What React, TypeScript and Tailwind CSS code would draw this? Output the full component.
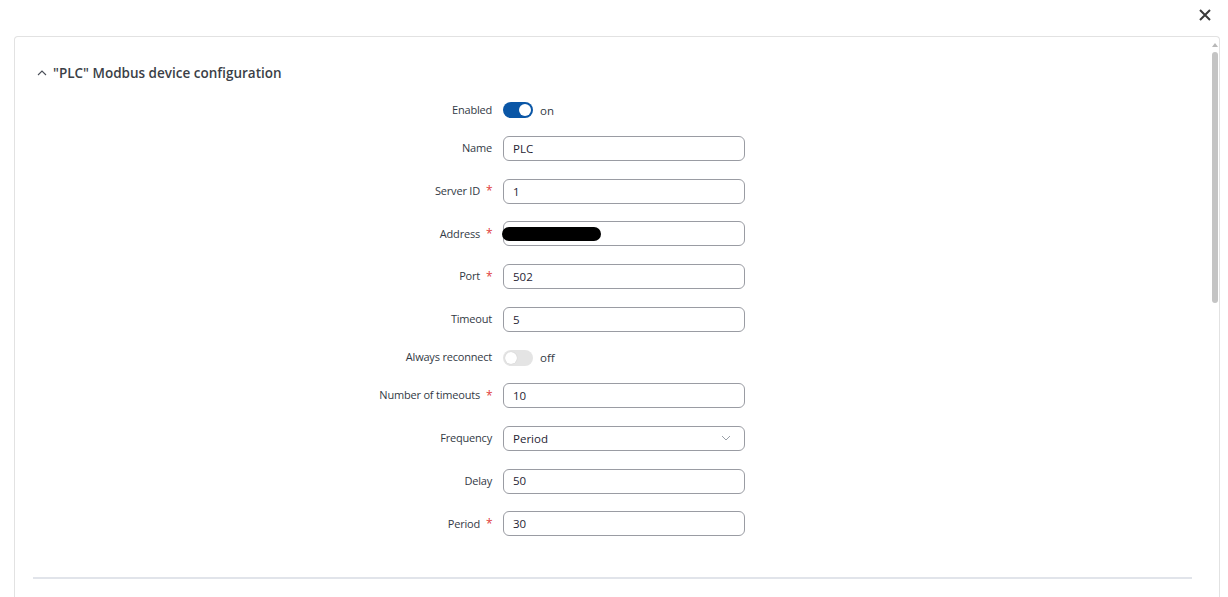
import React from "react";

const font = { fontFamily: '"Open Sans", "Noto Sans", sans-serif' };

function Label({ text, req }: { text: string; req?: boolean }) {
  return (
    <div className="w-[477px] shrink-0 flex justify-end items-center text-[11px] tracking-[-0.2px] text-[#333a45]">
      <span>{text}</span>
      {req ? <span className="ml-[6px] text-[#e0403a] w-[6px] text-[12px]">*</span> : null}
    </div>
  );
}

function InputRow({ label, value, req, redact }: { label: string; value: string; req?: boolean; redact?: boolean }) {
  return (
    <div className="flex items-center gap-[11px] h-[25px]">
      <Label text={label} req={req} />
      <div className="relative w-[242px] h-[25px] rounded-[6px] border border-[#9a9ca3] flex items-center px-[9px] text-[11.5px] text-[#1f2433]">
        {value}
        {redact ? (
          <span className="absolute left-[-2px] top-[5px] w-[99px] h-[14px] rounded-full bg-black" />
        ) : null}
      </div>
    </div>
  );
}

function ToggleRow({ label, on }: { label: string; on: boolean }) {
  return (
    <div className="flex items-center gap-[11px] h-[16px]">
      <Label text={label} />
      <div className="flex items-center gap-[7px]">
        <div
          className={
            on
              ? "w-[30px] h-[16px] rounded-full bg-[#0a56a6] flex items-center justify-end pr-[2px]"
              : "w-[30px] h-[16px] rounded-full bg-[#e4e4e4] flex items-center justify-start pl-[2px]"
          }
        >
          <div className={on ? "w-[12px] h-[12px] rounded-full bg-white" : "w-[12px] h-[12px] rounded-full bg-white shadow-[0_0_1px_rgba(0,0,0,0.2)]"} />
        </div>
        <span className="text-[11.5px] text-[#333a45]">{on ? "on" : "off"}</span>
      </div>
    </div>
  );
}

function SelectRow({ label, value }: { label: string; value: string }) {
  return (
    <div className="flex items-center gap-[11px] h-[25px]">
      <Label text={label} />
      <div className="w-[242px] h-[25px] rounded-[6px] border border-[#9a9ca3] flex items-center justify-between pl-[9px] pr-[13px] text-[11.5px] text-[#1f2433]">
        <span>{value}</span>
        <svg width="10" height="6" viewBox="0 0 10 6" fill="none">
          <path d="M1 1l4 4 4-4" stroke="#9aa0a8" strokeWidth="1" />
        </svg>
      </div>
    </div>
  );
}

export default function App() {
  return (
    <div className="w-[1228px] h-[597px] bg-white overflow-hidden flex flex-col" style={font}>
      <div className="h-[36px] flex items-start justify-end pr-[16px] pt-[8px]">
        <svg width="14" height="14" viewBox="0 0 14 14" fill="none">
          <path d="M2 2l10 10M12 2L2 12" stroke="#3a3a3a" strokeWidth="2" />
        </svg>
      </div>
      <div className="ml-[14px] mr-[8px] flex-1 border-l border-t border-r border-[#e2e2e2] rounded-t-[4px] flex">
        <div className="w-[1177px] flex flex-col pl-[18px]">
          <div className="h-[20px] mt-[26px] flex items-center gap-[6px]">
            <svg width="10" height="10" viewBox="0 0 10 10" fill="none" className="ml-[4px]">
              <path d="M1 7l4-4 4 4" stroke="#4a4f58" strokeWidth="1.1" />
            </svg>
            <span className="text-[13.5px] font-semibold text-[#3b3f47]">"PLC" Modbus device configuration</span>
          </div>
          <div className="mt-[19.4px] flex flex-col gap-[17.7px] -ml-[18px]">
            <ToggleRow label="Enabled" on={true} />
            <InputRow label="Name" value="PLC" />
            <InputRow label="Server ID" value="1" req />
            <InputRow label="Address" value="" req redact />
            <InputRow label="Port" value="502" req />
            <InputRow label="Timeout" value="5" />
            <ToggleRow label="Always reconnect" on={false} />
            <InputRow label="Number of timeouts" value="10" req />
            <SelectRow label="Frequency" value="Period" />
            <InputRow label="Delay" value="50" />
            <InputRow label="Period" value="30" req />
          </div>
          <div className="mt-[41px] h-[2px] bg-[#e1e4ea]" />
        </div>
        <div className="flex-1 flex flex-col items-end pt-[6px] pr-[1px]">
          <div className="w-[6px] flex flex-col items-center">
            <svg width="6" height="4" viewBox="0 0 6 4">
              <path d="M3 0L6 4H0z" fill="#b8b8b8" />
            </svg>
            <div className="mt-[5px] w-[6px] h-[251px] rounded-full bg-[#c4c4c4]" />
          </div>
        </div>
      </div>
    </div>
  );
}
